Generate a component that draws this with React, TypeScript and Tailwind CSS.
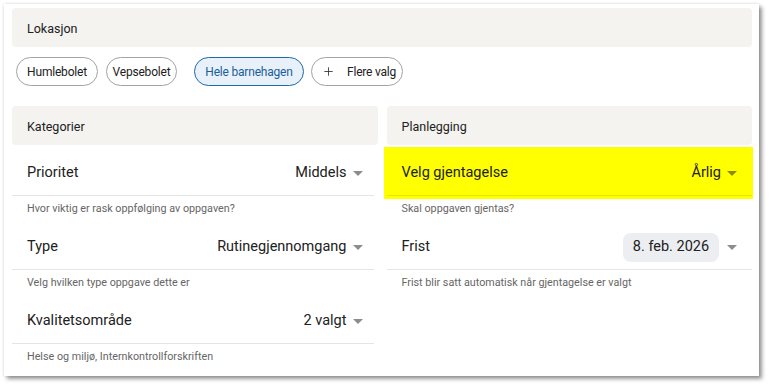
import { Plus } from 'lucide-react';

function Caret() {
  return (
    <svg width="10" height="5" viewBox="0 0 10 5" className="shrink-0">
      <path d="M0 0 L10 0 L5 5 Z" fill="rgba(0,0,0,0.45)" />
    </svg>
  );
}

function Field({ label, value, pill, pr = 'pr-[15px]' }: { label: string; value: string; pill?: boolean; pr?: string }) {
  return (
    <div className={`h-[49px] pt-[4px] flex items-center justify-between pl-[15px] border-b border-black/10 ${pr}`}>
      <span className="text-[14.5px] text-[#212121]">{label}</span>
      <div className="flex items-center">
        {pill ? (
          <span className="h-[29px] w-[96px] flex items-center justify-center rounded-[8px] bg-[#eceef1] text-[14.5px] text-[#212121] mr-[8px]">
            {value}
          </span>
        ) : (
          <span className="text-[14.5px] text-[#212121] mr-[6px]">{value}</span>
        )}
        <Caret />
      </div>
    </div>
  );
}

function Helper({ text }: { text: string }) {
  return (
    <div className="h-[25px] pt-[2px] flex items-center pl-[15px] text-[10.75px] text-[#666666]">{text}</div>
  );
}

function Header({ title }: { title: string }) {
  return (
    <div className="h-[39px] pt-[3px] flex items-center px-[15px] rounded-[4px] bg-[#f4f3f0] text-[12.5px] text-[#212121]">
      {title}
    </div>
  );
}

export default function App() {
  return (
    <div className="w-[769px] h-[386px] bg-white pt-[4px] pl-[4px]" style={{ fontFamily: 'Roboto, "Noto Sans", sans-serif' }}>
      <div className="w-[755px] h-[372px] bg-white pl-[8px] pr-[7px] pt-[4px] shadow-[0_0_3px_rgba(0,0,0,0.15),3px_3px_4px_rgba(0,0,0,0.4)]">
        {/* Lokasjon */}
        <Header title="Lokasjon" />
        <div className="flex items-center mt-[10px] ml-[4px]">
          <button className="h-[29px] w-[82px] flex items-center justify-center rounded-full border border-[#a3a3a3] text-[12px] tracking-[-0.2px] text-[#212121]">
            Humlebolet
          </button>
          <button className="h-[29px] w-[71px] ml-[8px] flex items-center justify-center rounded-full border border-[#a3a3a3] text-[12px] tracking-[-0.2px] text-[#212121]">
            Vepsebolet
          </button>
          <button className="h-[29px] w-[110px] ml-[17px] flex items-center justify-center rounded-full border border-[#1f6aa5] bg-[#e8f1fa] text-[12px] tracking-[-0.2px] text-[#1b5e99]">
            Hele barnehagen
          </button>
          <button className="h-[29px] w-[92px] ml-[7px] flex items-center pl-[10px] rounded-full border border-[#a3a3a3] text-[12px] tracking-[-0.2px] text-[#212121]">
            <Plus size={13} strokeWidth={1.6} className="text-[#333]" />
            <span className="ml-[12px]">Flere valg</span>
          </button>
        </div>

        <div className="grid grid-cols-2 gap-[9px] mt-[20px]">
          {/* Kategorier */}
          <div>
            <Header title="Kategorier" />
            <div className="mt-[2px] mr-[4px]">
              <Field label="Prioritet" value="Middels" pr="pr-[11px]" />
            </div>
            <Helper text="Hvor viktig er rask oppfølging av oppgaven?" />
            <div className="mr-[4px]">
              <Field label="Type" value="Rutinegjennomgang" pr="pr-[11px]" />
            </div>
            <Helper text="Velg hvilken type oppgave dette er" />
            <div className="mr-[4px]">
              <Field label="Kvalitetsområde" value="2 valgt" pr="pr-[11px]" />
            </div>
            <Helper text="Helse og miljø, Internkontrollforskriften" />
          </div>

          {/* Planlegging */}
          <div>
            <Header title="Planlegging" />
            <div className="mt-[2px] -ml-[3px] -mr-[1px] pl-[3px] pr-[1px] pb-[3px] -mb-[3px] bg-[#ffff00]">
              <Field label="Velg gjentagelse" value="Årlig" />
            </div>
            <Helper text="Skal oppgaven gjentas?" />
            <Field label="Frist" value="8. feb. 2026" pill />
            <Helper text="Frist blir satt automatisk når gjentagelse er valgt" />
          </div>
        </div>
      </div>
    </div>
  );
}
